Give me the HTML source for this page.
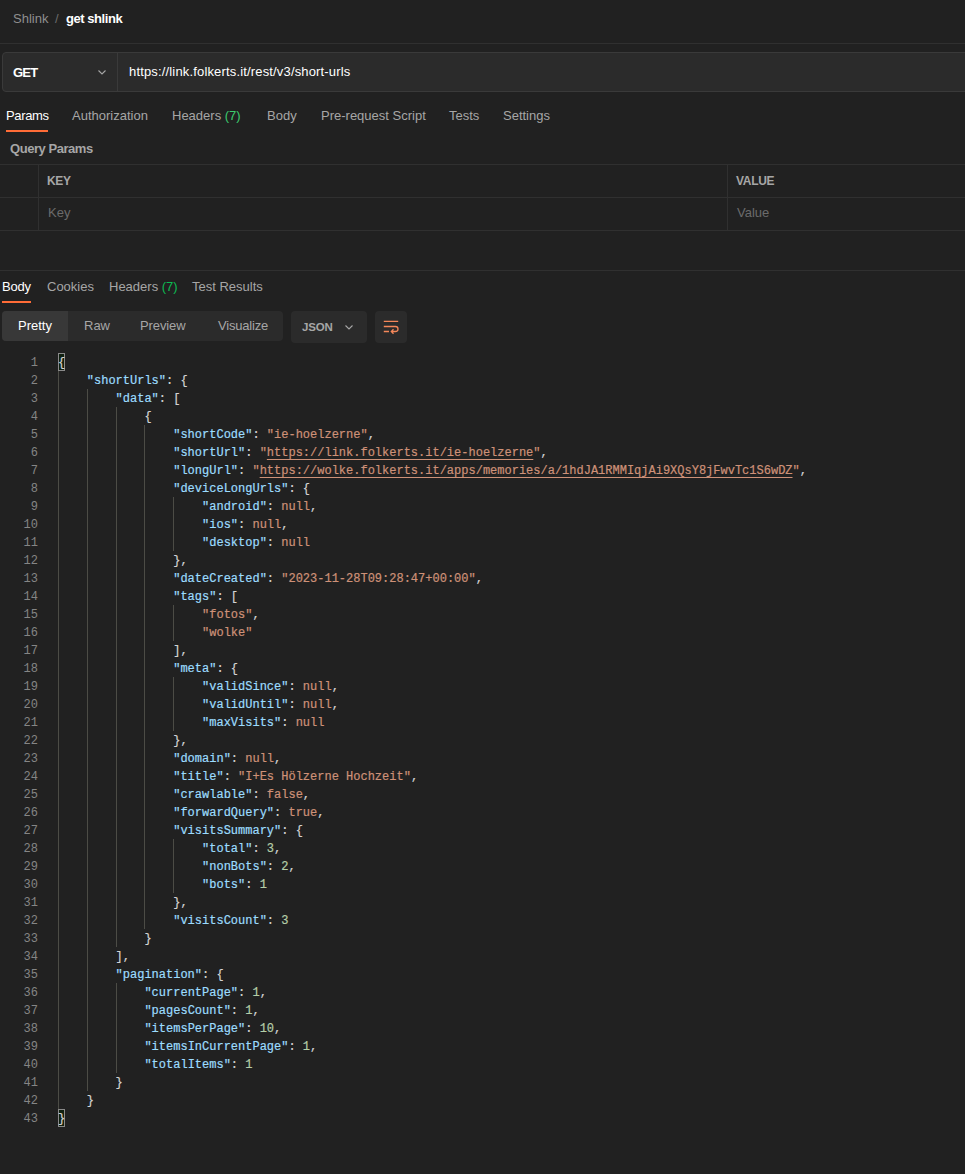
<!DOCTYPE html>
<html><head><meta charset="utf-8">
<style>
*{margin:0;padding:0;box-sizing:border-box}
html,body{width:965px;height:1174px;overflow:hidden;background:#212121}
body{position:relative;font-family:"Liberation Sans",sans-serif;font-size:13px;color:#a6a6a6}
.a{position:absolute;white-space:pre}
.hl{position:absolute;left:0;width:965px;height:1px;background:#303030}
.wh{color:#fff}
.gr{color:#0cbb52}
.gr2{color:#3ccb6e}
.code{position:absolute;left:58px;top:354px;font-family:"Liberation Mono",monospace;font-size:12px;line-height:18px;color:#d4d4d4;white-space:pre;-webkit-text-stroke:0.2px}
.ln{position:absolute;left:0;top:354px;width:38px;text-align:right;font-family:"Liberation Mono",monospace;font-size:12px;line-height:18px;color:#858585;white-space:pre}
.k{color:#9cdcfe}
.s{color:#ce9178}
.n{color:#b5cea8}
.nl{color:#ce9178}
.u{text-decoration:underline;text-underline-offset:3px;text-decoration-thickness:1px}
.g{position:absolute;width:1px;background:#4c4c46}
</style></head><body>
<!-- breadcrumb -->
<div class="a" style="left:13px;top:11px;line-height:16px;color:#8f8f8f">Shlink</div><div class="a" style="left:55px;top:11px;line-height:16px;color:#6b6b6b">/</div><div class="a wh" style="left:66px;top:11px;line-height:16px;font-weight:bold;letter-spacing:-0.45px">get shlink</div>
<div class="hl" style="top:43px"></div>
<!-- request bar -->
<div class="a" style="left:2px;top:52px;width:970px;height:40px;background:#2b2b2b;border:1px solid #3a3a3a;border-radius:4px"></div>
<div class="a" style="left:117px;top:53px;width:1px;height:38px;background:#3a3a3a"></div>
<div class="a wh" style="left:13px;top:65px;line-height:16px;font-weight:bold;letter-spacing:-0.8px">GET</div>
<svg class="a" style="left:96px;top:66px" width="12" height="12" viewBox="0 0 12 12"><path d="M2.5 4.5 L6 8 L9.5 4.5" fill="none" stroke="#a6a6a6" stroke-width="1.1"/></svg>
<div class="a wh" style="left:129px;top:64px;line-height:16px;letter-spacing:0.16px">https://link.folkerts.it/rest/v3/short-urls</div>
<!-- tabs -->
<div class="a wh" style="left:6px;top:108px;line-height:16px;letter-spacing:-0.35px">Params</div>
<div class="a" style="left:6px;top:130px;width:42px;height:2px;background:#ff6c37"></div>
<div class="a" style="left:72px;top:108px;line-height:16px">Authorization</div>
<div class="a" style="left:172px;top:108px;line-height:16px">Headers <span class="gr2">(7)</span></div>
<div class="a" style="left:267px;top:108px;line-height:16px">Body</div>
<div class="a" style="left:321px;top:108px;line-height:16px">Pre-request Script</div>
<div class="a" style="left:449px;top:108px;line-height:16px">Tests</div>
<div class="a" style="left:503px;top:108px;line-height:16px">Settings</div>
<div class="a" style="left:10px;top:141px;line-height:16px;font-weight:bold;letter-spacing:-0.45px">Query Params</div>
<!-- table -->
<div class="hl" style="top:164px"></div>
<div class="hl" style="top:197px"></div>
<div class="hl" style="top:230px"></div>
<div class="a" style="left:38px;top:165px;width:1px;height:65px;background:#303030"></div>
<div class="a" style="left:727px;top:165px;width:1px;height:65px;background:#303030"></div>
<div class="a" style="left:47px;top:173px;line-height:16px;font-weight:bold;font-size:12px;letter-spacing:-0.3px">KEY</div>
<div class="a" style="left:736px;top:173px;line-height:16px;font-weight:bold;font-size:12px;letter-spacing:-0.3px">VALUE</div>
<div class="a" style="left:48px;top:205px;line-height:16px;color:#6b6b6b">Key</div>
<div class="a" style="left:737px;top:205px;line-height:16px;color:#6b6b6b">Value</div>
<!-- response -->
<div class="hl" style="top:270px"></div>
<div class="a wh" style="left:2px;top:279px;line-height:16px;letter-spacing:-0.25px">Body</div>
<div class="a" style="left:2px;top:301px;width:29px;height:2px;background:#ff6c37"></div>
<div class="a" style="left:47px;top:279px;line-height:16px">Cookies</div>
<div class="a" style="left:109px;top:279px;line-height:16px">Headers <span class="gr">(7)</span></div>
<div class="a" style="left:192px;top:279px;line-height:16px">Test Results</div>
<!-- seg control -->
<div class="a" style="left:2px;top:311px;width:281px;height:30px;background:#2b2b2b;border-radius:4px"></div>
<div class="a" style="left:2px;top:311px;width:66px;height:30px;background:#383838;border-radius:4px 0 0 4px"></div>
<div class="a wh" style="left:18px;top:318px;line-height:16px">Pretty</div>
<div class="a" style="left:84px;top:318px;line-height:16px">Raw</div>
<div class="a" style="left:140px;top:318px;line-height:16px;letter-spacing:-0.1px">Preview</div>
<div class="a" style="left:218px;top:318px;line-height:16px;letter-spacing:-0.2px">Visualize</div>
<div class="a" style="left:291px;top:311px;width:76px;height:32px;background:#2b2b2b;border-radius:4px"></div>
<div class="a" style="left:302px;top:319px;line-height:16px;font-weight:bold;font-size:11.5px;letter-spacing:-0.2px">JSON</div>
<svg class="a" style="left:343px;top:321px" width="12" height="12" viewBox="0 0 12 12"><path d="M2.5 4.5 L6 8 L9.5 4.5" fill="none" stroke="#a6a6a6" stroke-width="1.1"/></svg>
<div class="a" style="left:375px;top:311px;width:32px;height:32px;background:#2b2b2b;border-radius:4px"></div>
<svg class="a" style="left:378px;top:314px" width="26" height="26" viewBox="0 0 26 26"><path d="M5.8 7.4H20.2M5.8 12.5H17.5A2.5 2.5 0 0 1 17.5 17.5H13.6M5.8 17.5H11M15.5 15.2L13.3 17.5L15.5 19.8" fill="none" stroke="#f4875a" stroke-width="1.3"/></svg>
<!--CODE-->
<div class="g" style="left:173px;top:497px;height:54px"></div>
<div class="g" style="left:173px;top:605px;height:36px"></div>
<div class="g" style="left:173px;top:677px;height:54px"></div>
<div class="g" style="left:173px;top:839px;height:54px"></div>
<div class="g" style="left:144px;top:425px;height:504px"></div>
<div class="g" style="left:116px;top:407px;height:540px"></div>
<div class="g" style="left:116px;top:983px;height:90px"></div>
<div class="g" style="left:87px;top:389px;height:702px"></div>
<div class="g" style="left:58px;top:371px;height:738px"></div>
<div class="a" style="left:58px;top:353px;width:7px;height:18px;border:1px solid #8a8a8a;background:#102010"></div>
<div class="a" style="left:58px;top:1109px;width:7px;height:18px;border:1px solid #8a8a8a;background:#102010"></div>
<div class="ln">1
2
3
4
5
6
7
8
9
10
11
12
13
14
15
16
17
18
19
20
21
22
23
24
25
26
27
28
29
30
31
32
33
34
35
36
37
38
39
40
41
42
43</div>
<div class="code">{
    <span class="k">"shortUrls"</span>: {
        <span class="k">"data"</span>: [
            {
                <span class="k">"shortCode"</span>: <span class="s">"ie-hoelzerne"</span>,
                <span class="k">"shortUrl"</span>: <span class="s">"<span class="u">https://link.folkerts.it/ie-hoelzerne</span>"</span>,
                <span class="k">"longUrl"</span>: <span class="s">"<span class="u">https://wolke.folkerts.it/apps/memories/a/1hdJA1RMMIqjAi9XQsY8jFwvTc1S6wDZ</span>"</span>,
                <span class="k">"deviceLongUrls"</span>: {
                    <span class="k">"android"</span>: <span class="nl">null</span>,
                    <span class="k">"ios"</span>: <span class="nl">null</span>,
                    <span class="k">"desktop"</span>: <span class="nl">null</span>
                },
                <span class="k">"dateCreated"</span>: <span class="s">"2023-11-28T09:28:47+00:00"</span>,
                <span class="k">"tags"</span>: [
                    <span class="s">"fotos"</span>,
                    <span class="s">"wolke"</span>
                ],
                <span class="k">"meta"</span>: {
                    <span class="k">"validSince"</span>: <span class="nl">null</span>,
                    <span class="k">"validUntil"</span>: <span class="nl">null</span>,
                    <span class="k">"maxVisits"</span>: <span class="nl">null</span>
                },
                <span class="k">"domain"</span>: <span class="nl">null</span>,
                <span class="k">"title"</span>: <span class="s">"I+Es Hölzerne Hochzeit"</span>,
                <span class="k">"crawlable"</span>: <span class="nl">false</span>,
                <span class="k">"forwardQuery"</span>: <span class="nl">true</span>,
                <span class="k">"visitsSummary"</span>: {
                    <span class="k">"total"</span>: <span class="n">3</span>,
                    <span class="k">"nonBots"</span>: <span class="n">2</span>,
                    <span class="k">"bots"</span>: <span class="n">1</span>
                },
                <span class="k">"visitsCount"</span>: <span class="n">3</span>
            }
        ],
        <span class="k">"pagination"</span>: {
            <span class="k">"currentPage"</span>: <span class="n">1</span>,
            <span class="k">"pagesCount"</span>: <span class="n">1</span>,
            <span class="k">"itemsPerPage"</span>: <span class="n">10</span>,
            <span class="k">"itemsInCurrentPage"</span>: <span class="n">1</span>,
            <span class="k">"totalItems"</span>: <span class="n">1</span>
        }
    }
}</div>
<!--/CODE-->
</body></html>
